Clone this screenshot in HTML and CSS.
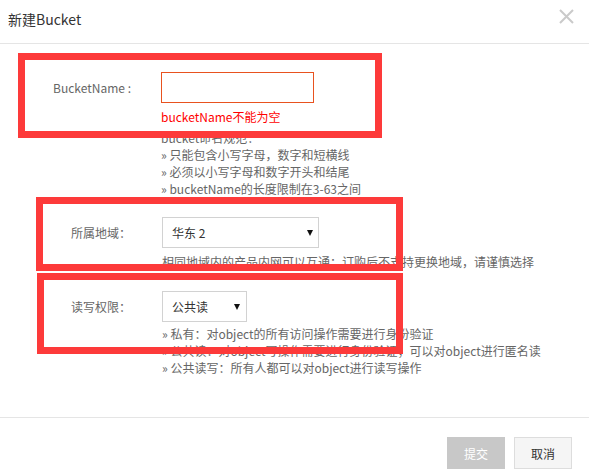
FILE: index.html
```html
<!DOCTYPE html>
<html>
<head>
    <meta charset="utf-8">
    <title>新建Bucket</title>
    <link rel="stylesheet" href="styles.css">
</head>
<body>
    <div class="dialog">
        <div class="dialog-header">
            <h3 class="dialog-title">新建Bucket</h3>
            <svg class="dialog-close" width="15" height="15" viewBox="0 0 15 15">
                <path d="M1 1 L14 14 M14 1 L1 14" stroke="#cacaca" stroke-width="2" fill="none" />
            </svg>
        </div>

        <div class="dialog-body">
            <div class="form-row">
                <div class="form-label">BucketName :</div>
                <div class="form-field">
                    <input class="text-input is-error" type="text" />
                    <div class="error-tip">bucketName不能为空</div>
                    <div class="rules">
                        <div>bucket命名规范：</div>
                        <div>» 只能包含小写字母，数字和短横线</div>
                        <div>» 必须以小写字母和数字开头和结尾</div>
                        <div>» bucketName的长度限制在3-63之间</div>
                    </div>
                </div>
            </div>

            <div class="form-row row-region">
                <div class="form-label">所属地域：</div>
                <div class="form-field">
                    <div class="select select-region">
                        <span>华东 2</span>
                        <span class="caret"></span>
                    </div>
                    <div class="hint">相同地域内的产品内网可以互通；订购后不支持更换地域，请谨慎选择</div>
                </div>
            </div>

            <div class="form-row row-acl">
                <div class="form-label">读写权限：</div>
                <div class="form-field">
                    <div class="select select-acl">
                        <span>公共读</span>
                        <span class="caret"></span>
                    </div>
                    <div class="hint hint-list">
                        <div>» 私有：对object的所有访问操作需要进行身份验证</div>
                        <div>» 公共读：对object写操作需要进行身份验证；可以对object进行匿名读</div>
                        <div>» 公共读写：所有人都可以对object进行读写操作</div>
                    </div>
                </div>
            </div>
        </div>

        <div class="dialog-footer">
            <button class="btn btn-submit" disabled>提交</button>
            <button class="btn btn-cancel">取消</button>
        </div>

        <!-- annotation boxes drawn over the form -->
        <div class="mark mark-name"></div>
        <div class="mark mark-region"></div>
        <div class="mark mark-acl"></div>
    </div>
</body>
</html>
```

FILE: styles.css
```css
* { margin: 0; padding: 0; box-sizing: border-box; }
body { font-family: "Noto Sans CJK SC", "Noto Sans", sans-serif; font-size: 12px; color: #666; background: #fff; }
.dialog { position: relative; height: 100vh; display: flex; flex-direction: column; }

.dialog-header { height: 44px; border-bottom: 1px solid #e5e5e5; display: flex; justify-content: space-between; align-items: flex-start; padding: 9px 15px 0 8px; }
.dialog-title { font-size: 14px; font-weight: normal; line-height: 20px; color: #333; }
.dialog-close { display: block; }

.dialog-body { flex: 1; padding-top: 28px; }
.form-row { display: flex; align-items: flex-start; }
.form-label { width: 131px; text-align: right; line-height: 31px; color: #666; }
.form-field { margin-left: 30px; }
.row-region { margin-top: 20px; }
.row-acl { margin-top: 21px; }

.text-input { display: block; width: 153px; height: 31px; border: 1px solid #ccc; outline: none; padding: 0 8px; font: inherit; }
.text-input.is-error { border-color: #e8521f; }
.error-tip { margin-top: 6px; line-height: 16px; color: #f00; }
.rules { margin-top: 4px; line-height: 17px; color: #666; }

.select { display: flex; justify-content: space-between; align-items: center; height: 31px; margin-left: 1px; border: 1px solid #d2d2d2; padding: 0 6px 0 9px; color: #333; background: #fff; }
.select-region { width: 157px; padding-right: 5px; }
.select-acl { width: 85px; }
.caret { width: 0; height: 0; border-left: 3px solid transparent; border-right: 3px solid transparent; border-top: 6px solid #111; }

.hint { margin-top: 5px; margin-left: 1px; line-height: 17px; color: #666; }
.hint-list { margin-top: 3px; }

.dialog-footer { height: 58px; border-top: 1px solid #e5e5e5; display: flex; justify-content: flex-end; align-items: flex-start; padding: 19px 17px 0 0; gap: 9px; }
.btn { width: 58px; height: 32px; font: inherit; font-size: 12px; border: 1px solid #ddd; cursor: pointer; }
.btn-submit { background: #c8c8c8; border-color: #c8c8c8; color: #fff; }
.btn-cancel { background: #f5f5f5; color: #333; }

.mark { position: absolute; border: 7px solid #fd3a3a; pointer-events: none; }
.mark-name { left: 18px; top: 53px; width: 364px; height: 85px; }
.mark-region { left: 36px; top: 197px; width: 367px; height: 74px; }
.mark-acl { left: 37px; top: 273px; width: 366px; height: 81px; }
```
